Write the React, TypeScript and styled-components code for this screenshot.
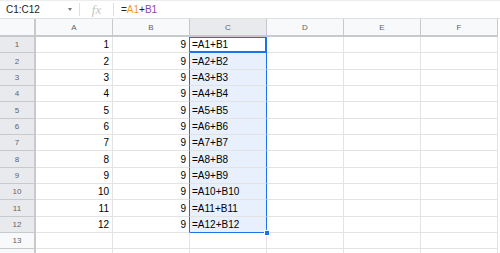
import React from "react";
import styled, { createGlobalStyle, css } from "styled-components";

const Global = createGlobalStyle`
  html, body { margin: 0; padding: 0; background: #fff; }
  body { font-family: Arial, "Liberation Sans", sans-serif; width: 500px; height: 253px; overflow: hidden; }
`;

const BLUE = "#1a73e8";
const GRID = "#e2e3e3";
const HEAD_BORDER = "#c7c9cc";

const Page = styled.div`
  width: 500px;
  height: 253px;
  overflow: hidden;
  display: flex;
  flex-direction: column;
`;

const FormulaBar = styled.div`
  height: 19px;
  box-sizing: border-box;
  border-top: 1px solid #eceded;
  border-bottom: 1px solid #e0e0e0;
  display: flex;
  align-items: center;
  flex: none;
`;

const NameBox = styled.div`
  width: 79px;
  box-sizing: border-box;
  padding: 0 7px 0 6px;
  display: flex;
  align-items: center;
  justify-content: space-between;
  font-size: 10px;
  color: #222;
`;

const Caret = styled.span`
  width: 0;
  height: 0;
  border-left: 2.5px solid transparent;
  border-right: 2.5px solid transparent;
  border-top: 3px solid #777;
`;

const Divider = styled.div`
  width: 1px;
  height: 13px;
  background: #e0e0e0;
`;

const Fx = styled.div`
  width: 33px;
  text-align: center;
  font-family: "Liberation Serif", serif;
  font-style: italic;
  font-size: 13px;
  color: #c4c4c4;
  line-height: 1;
`;

const Formula = styled.div`
  padding-left: 7px;
  font-size: 10px;
  color: #222;
`;

const Ref = styled.span<{ $c: string }>`
  color: ${(p) => p.$c};
`;

const Sheet = styled.div<{ $rows: string }>`
  position: relative;
  display: grid;
  grid-template-columns: 36px repeat(6, 77px);
  grid-template-rows: ${(p) => p.$rows};
  flex: none;
`;

const Corner = styled.div`
  background: #f8f9fa;
  border-right: 2px solid ${HEAD_BORDER};
  border-bottom: 2px solid ${HEAD_BORDER};
  box-sizing: border-box;
`;

const ColHead = styled.div<{ $sel?: boolean }>`
  box-sizing: border-box;
  background: ${(p) => (p.$sel ? "#e8eaed" : "#f8f9fa")};
  border-right: 1px solid ${HEAD_BORDER};
  border-bottom: 2px solid ${HEAD_BORDER};
  display: flex;
  align-items: center;
  justify-content: center;
  font-size: 8px;
  color: #5f6368;
`;

const RowHead = styled.div<{ $sel?: boolean }>`
  box-sizing: border-box;
  background: ${(p) => (p.$sel ? "#e8eaed" : "#f8f9fa")};
  border-right: 2px solid ${HEAD_BORDER};
  border-bottom: 1px solid ${HEAD_BORDER};
  display: flex;
  align-items: center;
  justify-content: center;
  font-size: 8px;
  color: #5f6368;
`;

const Cell = styled.div<{
  $num?: boolean;
  $sel?: boolean;
  $blueRight?: boolean;
  $blueBottom?: boolean;
  $active?: boolean;
}>`
  box-sizing: border-box;
  border-right: 1px solid ${(p) => (p.$blueRight ? BLUE : GRID)};
  border-bottom: 1px solid ${(p) => (p.$blueBottom ? BLUE : GRID)};
  background: ${(p) => (p.$sel ? "#e8f0fe" : "#fff")};
  display: flex;
  align-items: center;
  justify-content: ${(p) => (p.$num ? "flex-end" : "flex-start")};
  padding: 0 3px 0 2px;
  font-size: 10px;
  color: #000;
  white-space: nowrap;
  ${(p) =>
    p.$active &&
    css`
      background: #fff;
      box-shadow: inset 0 1px 0 ${BLUE}, inset -1px 0 0 ${BLUE}, inset 0 -1px 0 ${BLUE};
      border-right-width: 1px;
    `}
`;

const FillHandle = styled.div<{ $top: number }>`
  position: absolute;
  left: 264px;
  width: 5px;
  height: 5px;
  background: ${BLUE};
  border: 1px solid #fff;
  box-sizing: border-box;
  width: 6px;
  height: 6px;
  top: ${(p) => p.$top}px;
`;

const COLS = ["A", "B", "C", "D", "E", "F"];
const N = 14;
const PITCH = 16.33;
const START = 37;
const bounds = Array.from({ length: N + 1 }, (_, i) => Math.round(START + i * PITCH));
const rowHeights = bounds.slice(1).map((b, i) => b - bounds[i]);
const templateRows = ["18px", ...rowHeights.map((h) => `${h}px`)].join(" ");

export default function App() {
  const rows = Array.from({ length: N }, (_, i) => i + 1);
  const handleTop = bounds[12] - 19 - 3;
  return (
    <Page>
      <Global />
      <FormulaBar>
        <NameBox>
          <span>C1:C12</span>
          <Caret />
        </NameBox>
        <Divider />
        <Fx>fx</Fx>
        <Divider />
        <Formula>
          =<Ref $c="#f29a38">A1</Ref>+<Ref $c="#8e44ad">B1</Ref>
        </Formula>
      </FormulaBar>
      <Sheet $rows={templateRows}>
        <Corner />
        {COLS.map((c) => (
          <ColHead key={c} $sel={c === "C"}>
            {c}
          </ColHead>
        ))}
        {rows.map((r) => {
          const inSel = r <= 12;
          return (
            <React.Fragment key={r}>
              <RowHead $sel={inSel}>{r}</RowHead>
              <Cell $num>{inSel ? r : ""}</Cell>
              <Cell $num $blueRight={inSel}>
                {inSel ? 9 : ""}
              </Cell>
              <Cell
                $sel={inSel}
                $blueRight={inSel}
                $blueBottom={r === 12 || r === 1}
                $active={r === 1}
              >
                {inSel ? `=A${r}+B${r}` : ""}
              </Cell>
              <Cell />
              <Cell />
              <Cell />
            </React.Fragment>
          );
        })}
        <FillHandle $top={handleTop} />
      </Sheet>
    </Page>
  );
}
